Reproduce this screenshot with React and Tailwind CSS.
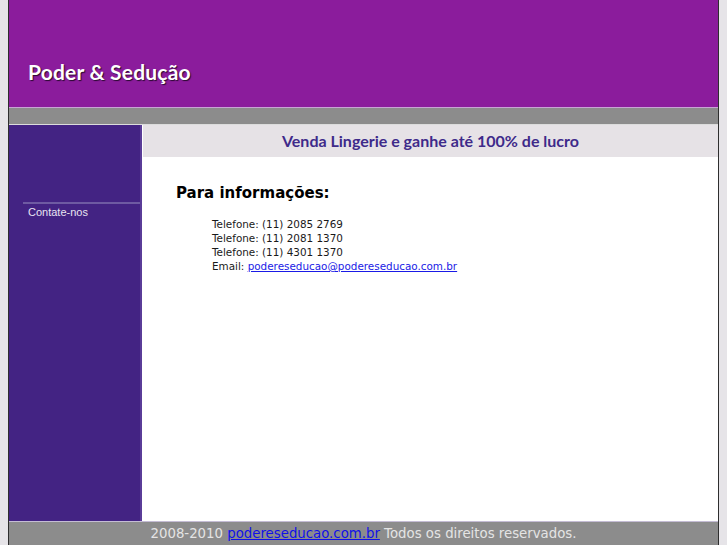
import React from 'react';

const phones = ['(11) 2085 2769', '(11) 2081 1370', '(11) 4301 1370'];

export default function App() {
    return (
        <div className="min-h-[545px] bg-[#e6e4e8] overflow-hidden">
            <div className="ml-[8px] w-[711px] border-x border-[#2e2e2e] flex flex-col h-[545px]">
                {/* header */}
                <div className="h-[107px] bg-[#8b1c9c] flex items-end pb-[22px] pl-[19px]">
                    <h1
                        className="text-white text-[21px] leading-[26px] font-bold tracking-[0.2px] [text-shadow:1px_1px_1px_#2a0a30]"
                        style={{ fontFamily: '"Lato", "DejaVu Sans", sans-serif' }}
                    >
                        Poder &amp; Sedução
                    </h1>
                </div>
                <div className="h-[18px] bg-[#8c8c8c] border-t border-[#c8a4d4] border-b border-b-[#dcdcdc]" />

                {/* body */}
                <div className="flex flex-1 min-h-0">
                    <aside className="w-[133px] bg-[#432383] border-r-2 border-[#5a3c98] pt-[77px]">
                        <div className="ml-[14px] border-t-2 border-[#6e5aa2] pl-[5px] leading-[12px]">
                            <a
                                className="text-[11px] leading-[12px] text-[#e8e4f2]"
                                style={{ fontFamily: '"Liberation Sans", Arial, sans-serif' }}
                            >
                                Contate-nos
                            </a>
                        </div>
                    </aside>
                    <main className="flex-1 bg-white pl-[1px]" style={{ fontFamily: '"DejaVu Sans", sans-serif' }}>
                        <div className="h-[32px] bg-[#e6e2e6] flex items-center justify-center">
                            <span
                                className="text-[16px] font-bold text-[#3e2a8a]"
                                style={{ fontFamily: '"Lato", "DejaVu Sans", sans-serif' }}
                            >
                                Venda Lingerie e ganhe até 100% de lucro
                            </span>
                        </div>
                        <div className="pl-[33px] pt-[26px]">
                            <h2 className="text-[15px] font-bold text-black leading-[20px]">Para informações:</h2>
                            <div className="pl-[36px] pt-[14px] text-[10.4px] leading-[14px] text-[#1a1a1a]">
                                {phones.map((p) => (
                                    <div key={p}>Telefone: {p}</div>
                                ))}
                                <div>
                                    Email:{' '}
                                    <a href="#" className="text-[#1a1ae6] underline">
                                        podereseducao@podereseducao.com.br
                                    </a>
                                </div>
                            </div>
                        </div>
                    </main>
                </div>

                {/* footer */}
                <footer
                    className="h-[24px] bg-[#8c8c8c] border-t border-[#c4bcd4] flex items-center justify-center text-[13.3px] text-[#e4e4e4]"
                    style={{ fontFamily: '"DejaVu Sans", sans-serif' }}
                >
                    <span>
                        2008-2010{' '}
                        <a href="#" className="text-[#1010e8] underline">
                            podereseducao.com.br
                        </a>{' '}
                        Todos os direitos reservados.
                    </span>
                </footer>
            </div>
        </div>
    );
}
